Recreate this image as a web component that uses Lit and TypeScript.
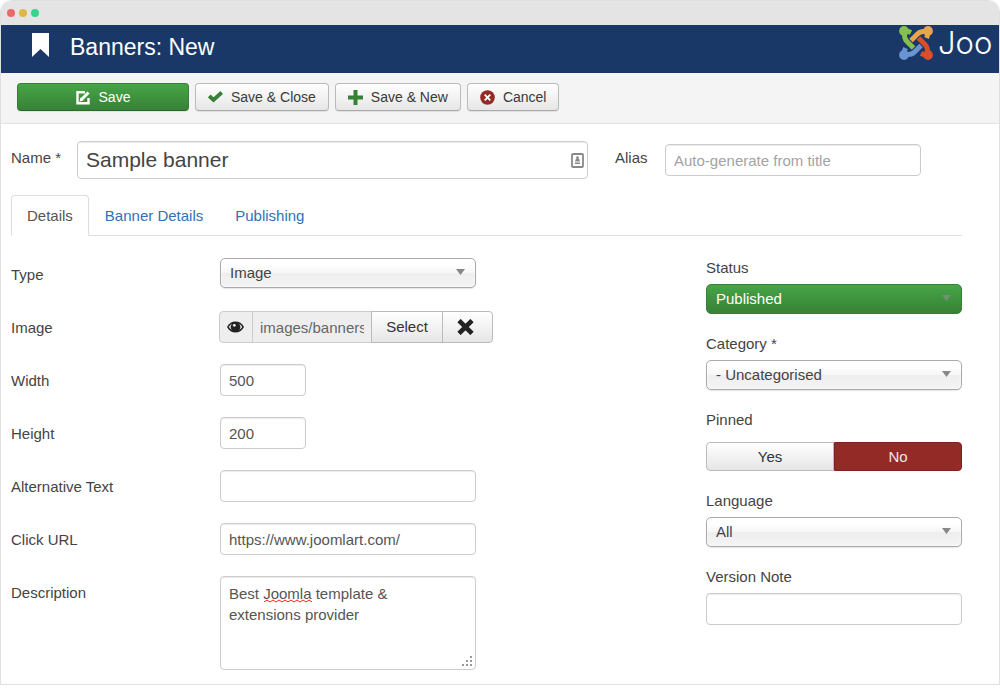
import { LitElement, html, css, svg } from "lit";
import { customElement, state } from "lit/decorators.js";

const icons = {
  bookmark: svg`<path fill="currentColor" d="M0 0h17v24l-8.500-8L0 24z"/>`,
};

@customElement("app-root")
export class AppRoot extends LitElement {
  @state() private pinned = "no";

  static styles = css`
    :host {
      display: block;
      font-family: "Liberation Sans", Arial, sans-serif;
      font-size: 15px;
      line-height: 20px;
      color: #444;
      background: #fff;
    }
    * { box-sizing: border-box; }
    svg { display: block; flex: none; }
    input, select, textarea, button { font: inherit; color: #555; margin: 0; }
    .window {
      border: 1px solid #dfdfdf;
      border-radius: 12px 12px 0 0;
      overflow: hidden;
      background: #fff;
    }
    .chrome {
      display: flex;
      align-items: center;
      gap: 4px;
      height: 24px;
      padding-left: 6px;
      background: #e4e4e4;
    }
    .dot { width: 8px; height: 8px; border-radius: 50%; }
    .dot.red { background: #e96a6a; }
    .dot.yellow { background: #e0b83f; }
    .dot.green { background: #35d58b; }
    .header {
      display: flex;
      align-items: center;
      height: 48px;
      padding: 0 0 4px 31px;
      background: #1a3867;
      color: #fff;
      overflow: hidden;
    }
    h1 { flex: 1; margin: 0 0 0 21px; font-size: 23px; font-weight: 400; line-height: 28px; }
    .bookmark { margin-bottom: 4px; }
    .brand { display: flex; align-items: center; gap: 5px; width: 100px; height: 44px; padding-bottom: 8px; }
    .brand span {
      font-family: Inter, sans-serif;
      font-weight: 300;
      font-size: 31px;
      line-height: 36px;
      white-space: nowrap;
    }
    .toolbar {
      display: flex;
      gap: 6px;
      padding: 10px 16px 12px;
      background: #f4f4f4;
      border-bottom: 1px solid #e2e2e2;
    }
    .btn {
      display: flex;
      align-items: center;
      justify-content: center;
      gap: 8px;
      height: 28px;
      padding: 0 12px;
      border: 1px solid #bbb;
      border-bottom-color: #a9a9a9;
      border-radius: 4px;
      background: linear-gradient(#fff, #e6e6e6);
      box-shadow: 0 1px 1px rgba(0, 0, 0, 0.08);
      color: #3a3a3a;
      font-size: 14px;
      white-space: nowrap;
    }
    .btn.save {
      width: 172px;
      border-color: #348034 #348034 #2a682a;
      background: linear-gradient(#46a546, #378137);
      color: #fff;
    }
    .content { padding: 17px 37px 14px 10px; }
    .titles {
      display: grid;
      grid-template-columns: 66px minmax(0, 1fr) 50px 256px;
      align-items: center;
      padding-right: 41px;
    }
    .titles label { padding-bottom: 4px; }
    .name-box { display: grid; align-items: center; margin-right: 27px; }
    .name-box > * { grid-area: 1 / 1; }
    .name-box svg { justify-self: end; margin-right: 4px; }
    .text {
      width: 100%;
      height: 32px;
      padding: 0 8px;
      border: 1px solid #ccc;
      border-radius: 4px;
      background: #fff;
      box-shadow: inset 0 1px 1px rgba(0, 0, 0, 0.08);
      outline: 0;
    }
    .text.large { height: 38px; font-size: 21px; color: #444; }
    .text.short { width: 86px; }
    .text::placeholder { color: #a3a3a3; opacity: 1; }
    .tabs {
      display: flex;
      margin-top: 16px;
      border-bottom: 1px solid #ddd;
    }
    .tab {
      height: 41px;
      margin-bottom: -1px;
      padding: 10px 15px;
      border: 1px solid transparent;
      border-radius: 4px 4px 0 0;
      color: #3071b9;
      text-decoration: none;
    }
    .tab.active { border-color: #ddd #ddd #fff; background: #fff; color: #555; }
    .panel {
      display: grid;
      grid-template-columns: minmax(0, 1fr) 256px;
      column-gap: 32px;
      padding-top: 22px;
    }
    .rows { display: flex; flex-direction: column; }
    .row {
      display: grid;
      grid-template-columns: 209px minmax(0, 274px);
      align-items: start;
      min-height: 53px;
    }
    .row > label { line-height: 34px; }
    .control { width: 256px; }
    .select {
      display: block;
      width: 100%;
      height: 30px;
      padding: 0 9px;
      border: 1px solid #aaa;
      border-radius: 5px;
      appearance: none;
      background: linear-gradient(#fff 20%, #f6f6f6 50%, #eee 52%, #f4f4f4 100%);
      box-shadow: 0 0 3px #fff inset, 0 1px 1px rgba(0, 0, 0, 0.1);
      color: #444;
      outline: 0;
    }
    .select-box { display: grid; align-items: center; }
    .select-box > * { grid-area: 1 / 1; }
    .select-box svg { justify-self: end; margin-right: 11px; margin-bottom: 2px; pointer-events: none; }
    .select.published { border-color: #378137; background: linear-gradient(#46a546, #378137); box-shadow: none; color: #fff; }
    .media { display: flex; height: 32px; }
    .media > * { border: 1px solid #bbb; border-radius: 0; height: 32px; margin: 0 0 0 -1px; padding: 0; }
    .media .preview {
      display: grid;
      place-items: center;
      width: 34px;
      padding-right: 2px;
      border-color: #ccc;
      border-radius: 4px 0 0 4px;
      background: #eee;
    }
    .media input { width: 120px; padding: 0 7px; border-color: #ccc; background: #eee; color: #666; outline: 0; }
    .media button {
      display: grid;
      place-items: center;
      width: 72px;
      background: linear-gradient(#fff, #e6e6e6);
      color: #333;
    }
    .media .clear { width: 51px; padding-right: 4px; border-radius: 0 4px 4px 0; }
    .area { position: relative; height: 94px; }
    .area textarea {
      display: block;
      width: 100%;
      height: 94px;
      padding: 6px 24px 6px 8px;
      line-height: 21px;
      resize: none;
    }
    .squiggle { position: absolute; left: 44px; top: 23px; }
    .grip { position: absolute; right: 4px; bottom: 4px; }
    .side { display: flex; flex-direction: column; gap: 20px; }
    .field { display: flex; flex-direction: column; gap: 6px; }
    .switch { border: 0; margin: 0; padding: 0; min-width: 0; }
    .switch legend { padding: 0; margin-bottom: 12px; }
    .options { display: grid; grid-template-columns: 1fr 1fr; }
    .option {
      position: relative;
      height: 29px;
      line-height: 27px;
      text-align: center;
      border: 1px solid #bbb;
      border-radius: 4px 0 0 4px;
      background: linear-gradient(#fff, #e6e6e6);
      color: #333;
    }
    .option + .option { border-radius: 0 4px 4px 0; }
    .option.off { border-color: #802020; background: #942a25; color: #e8e8e8; }
    .option.on { border-color: #348034; background: #46a546; color: #fff; }
    .option input { position: absolute; opacity: 0; margin: 0; }
  `;

  private arrow(color = "#888") {
    return html`<svg width="9" height="8" viewBox="0 0 9 8" aria-hidden="true"><path fill=${color} d="M0 1h9L4.500 7z"/></svg>`;
  }

  private picker(id: string, value: string, cls = "") {
    return html`<div class="select-box">
      <select id=${id} class="select ${cls}"><option>${value}</option></select>
      ${this.arrow(cls ? "#74916f" : "#888")}
    </div>`;
  }

  render() {
    const p = this.pinned;
    return html`
      <div class="window">
        <div class="chrome"><i class="dot red"></i><i class="dot yellow"></i><i class="dot green"></i></div>
        <header class="header">
          <svg class="bookmark" width="17" height="24" viewBox="0 0 17 24" aria-hidden="true">${icons.bookmark}</svg>
          <h1>Banners: New</h1>
          <div class="brand">
            <svg width="34" height="34" viewBox="0 0 34 34" fill="none" stroke-width="5" aria-hidden="true">
              <g stroke="#e9a54b"><circle cx="29" cy="5" r="2.400"/><path d="M28 6c1 2 .5 4-.5 6M28 6c-4-1-7-.5-9.500 2L12 14.500"/></g>
              <g stroke="#db4f28"><circle cx="29" cy="29" r="2.400"/><path d="M28 28c-2 1-4 .5-6-.5M28 28c1-4 .5-7-2-9.500L19.500 12"/></g>
              <g stroke="#6a93d2"><circle cx="5" cy="29" r="2.400"/><path d="M6 28c-1-2-.5-4 .5-6M6 28c4 1 7 .5 9.500-2l6.500-6.500"/></g>
              <g stroke="#86c04c"><circle cx="5" cy="5" r="2.400"/><path d="M6 6c2-1 4-.5 6 .5M6 6c-1 4-.5 7 2 9.500l6.500 6.500"/></g>
            </svg>
            <span>Joo</span>
          </div>
        </header>
        <div class="toolbar">
          <button class="btn save" type="button">
            <svg width="15" height="15" viewBox="0 0 15 15" fill="none" stroke="currentColor" aria-hidden="true"><path stroke-width="2.400" d="M9 2.200H1.500v11h11V8"/><path stroke-width="3" d="M5.500 9.500 12.500 2.500"/><path fill="currentColor" stroke="none" d="M3.500 11.500 4.500 7.500l3 3z"/></svg>
            Save
          </button>
          <button class="btn" type="button">
            <svg width="15" height="12" viewBox="0 0 15 12" fill="none" stroke="#378137" stroke-width="3.800" aria-hidden="true"><path d="M1.300 5 5.500 9 13.700 1.500"/></svg>
            Save &amp; Close
          </button>
          <button class="btn" type="button">
            <svg width="15" height="15" viewBox="0 0 15 15" fill="#378137" aria-hidden="true"><path d="M5.500 0h4v5.500H15v4H9.500V15h-4V9.500H0v-4h5.500z"/></svg>
            Save &amp; New
          </button>
          <button class="btn" type="button">
            <svg width="15" height="15" viewBox="0 0 15 15" aria-hidden="true"><circle cx="7.500" cy="7.500" r="7.300" fill="#942a25"/><path stroke="#fff" stroke-width="1.800" d="m4.700 4.700 5.600 5.600m0-5.600-5.600 5.600"/></svg>
            Cancel
          </button>
        </div>
        <main class="content">
          <div class="titles">
            <label for="name">Name *</label>
            <div class="name-box">
              <input id="name" class="text large" value="Sample banner" />
              <svg width="13" height="15" viewBox="0 0 13 15" aria-hidden="true"><rect x="1" y="1" width="11" height="13" rx="1" fill="#fff" stroke="#888" stroke-width="1.800"/><circle cx="6.500" cy="4.500" r="1.300" fill="#888"/><path fill="#888" d="M5 5.500h3L9 8.500H4zM4 9.500h5v1.500H4z"/></svg>
            </div>
            <label for="alias">Alias</label>
            <input id="alias" class="text" placeholder="Auto-generate from title" />
          </div>
          <nav class="tabs">
            <a class="tab active" href="#details">Details</a>
            <a class="tab" href="#banner">Banner Details</a>
            <a class="tab" href="#publishing">Publishing</a>
          </nav>
          <div class="panel">
            <div class="rows">
              <div class="row"><label for="type">Type</label><div class="control">${this.picker("type", "Image")}</div></div>
              <div class="row">
                <label for="image">Image</label>
                <div class="media">
                  <span class="preview"><svg width="17" height="12" viewBox="0 0 17 12" aria-hidden="true"><path fill="#222" d="M0 6C2 2.300 5 .5 8.500.5S15 2.300 17 6c-2 3.700-5 5.500-8.500 5.500S2 9.700 0 6z"/><path fill="#eee" d="M1.800 6C2.700 4.400 3.800 3.300 5 2.700a4.400 4.400 0 0 0 0 6.400C3.700 8.400 2.600 7.400 1.800 6zm13.400 0c-.9-1.600-2-2.700-3.200-3.300a4.400 4.400 0 0 1 0 6.400c1.300-.7 2.400-1.700 3.200-3.100z"/><circle cx="7.300" cy="4.300" r="1.400" fill="#eee"/></svg></span>
                  <input id="image" readonly value="images/banners/sample.jpg" />
                  <button type="button">Select</button>
                  <button class="clear" type="button" aria-label="Clear"><svg width="17" height="16" viewBox="0 0 17 16" aria-hidden="true"><path stroke="#222" stroke-width="4.600" d="m2 1.500 13 13m0-13-13 13"/></svg></button>
                </div>
              </div>
              <div class="row"><label for="width">Width</label><input id="width" class="text short" value="500" /></div>
              <div class="row"><label for="height">Height</label><input id="height" class="text short" value="200" /></div>
              <div class="row"><label for="alt">Alternative Text</label><div class="control"><input id="alt" class="text" /></div></div>
              <div class="row"><label for="url">Click URL</label><div class="control"><input id="url" class="text" value="https://www.joomlart.com/" /></div></div>
              <div class="row">
                <label for="desc">Description</label>
                <div class="control area">
                  <textarea id="desc" class="text" spellcheck="false" .value=${"Best Joomla template & extensions provider"}></textarea>
                  <svg class="squiggle" width="48" height="4" viewBox="0 0 48 4" aria-hidden="true"><path fill="none" stroke="#f22" d="M0 3l3-2 3 2 3-2 3 2 3-2 3 2 3-2 3 2 3-2 3 2 3-2 3 2 3-2 3 2 3-2 3 2"/></svg>
                  <svg class="grip" width="10" height="10" viewBox="0 0 10 10" fill="#999" aria-hidden="true"><path d="M8 0h2v2H8zM8 4h2v2H8zM4 4h2v2H4zM8 8h2v2H8zM4 8h2v2H4zM0 8h2v2H0z"/></svg>
                </div>
              </div>
            </div>
            <div class="side">
              <div class="field"><label for="status">Status</label>${this.picker("status", "Published", "published")}</div>
              <div class="field"><label for="category">Category *</label>${this.picker("category", "- Uncategorised")}</div>
              <fieldset class="switch">
                <legend>Pinned</legend>
                <div class="options">
                  <label class="option ${p === "yes" ? "on" : ""}"><input type="radio" name="pinned" .checked=${p === "yes"} @change=${() => (this.pinned = "yes")} />Yes</label>
                  <label class="option ${p === "no" ? "off" : ""}"><input type="radio" name="pinned" .checked=${p === "no"} @change=${() => (this.pinned = "no")} />No</label>
                </div>
              </fieldset>
              <div class="field"><label for="language">Language</label>${this.picker("language", "All")}</div>
              <div class="field"><label for="note">Version Note</label><input id="note" class="text" /></div>
            </div>
          </div>
        </main>
      </div>
    `;
  }
}
